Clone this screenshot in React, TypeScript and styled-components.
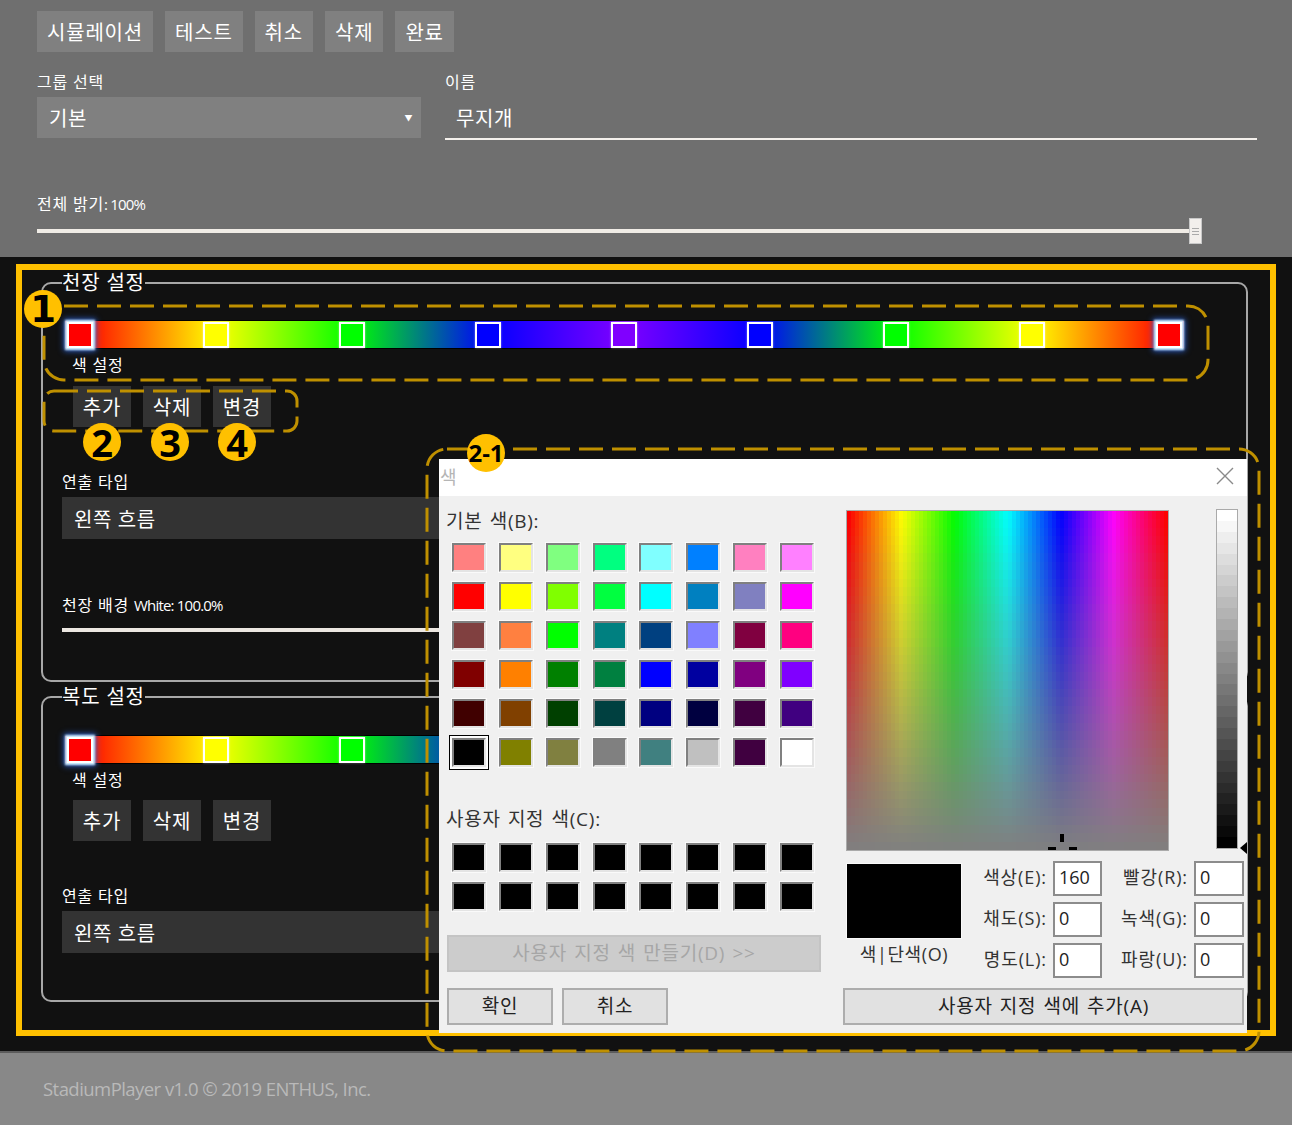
import React from "react";
import styled, { createGlobalStyle } from "styled-components";

const FONT = `"Open Sans", "Noto Sans CJK KR", sans-serif`;

const GlobalStyle = createGlobalStyle`
  html, body {
    margin: 0;
    padding: 0;
    background: #111;
    font-family: ${FONT};
  }
  * {
    box-sizing: border-box;
  }
`;

// Page sections
const Page = styled.div`
  position: relative;
  width: 1292px;
  height: 1125px;
  overflow: hidden;
  color: #fff;
`;

const Header = styled.header`
  height: 257px;
  padding: 11px 35px 0 37px;
  background: #6f6f6f;
`;

const Toolbar = styled.div`
  display: flex;
  gap: 12px;
`;

const ActionButton = styled.div<{ $dark?: boolean }>`
  display: flex;
  align-items: center;
  justify-content: center;
  height: 41px;
  padding: 0 10px;
  width: ${(p) => (p.$dark ? "58px" : "auto")};
  background: ${(p) => (p.$dark ? "#333" : "#808080")};
  color: #fff;
  font-size: 20px;
  letter-spacing: 0.8px;
  white-space: nowrap;
`;

const FormRow = styled.div`
  display: grid;
  grid-template-columns: 384px 812px;
  column-gap: 24px;
  margin-top: 20px;
`;

const FieldLabel = styled.div<{ $top?: number }>`
  height: 20px;
  margin-top: ${(p) => p.$top ?? 0}px;
  margin-bottom: 5px;
  font-size: 16px;
  line-height: 20px;
  letter-spacing: 0.8px;
  color: #fff;
`;

const NarrowText = styled.span`
  font-size: 15px;
  letter-spacing: -0.8px;
`;

const Dropdown = styled.div<{ $dark?: boolean }>`
  display: flex;
  align-items: center;
  justify-content: space-between;
  height: ${(p) => (p.$dark ? "42px" : "41px")};
  padding: 0 8px 0 12px;
  background: ${(p) => (p.$dark ? "#333" : "#808080")};
  font-size: 20px;
  letter-spacing: 0.6px;
`;

const Caret = styled.span`
  font-size: 8px;
`;

const NameInput = styled.div`
  display: flex;
  align-items: center;
  height: 43px;
  padding-left: 11px;
  border-bottom: 2px solid #f4f0ec;
  font-size: 20px;
  letter-spacing: 0.6px;
`;

const SliderRow = styled.div`
  display: flex;
  align-items: center;
  width: 1165px;
  height: 26px;
  margin-top: -1px;
`;

const SliderTrack = styled.div`
  flex: 1;
  height: 4px;
  background: #f0ece6;
`;

const SliderThumb = styled.div`
  display: flex;
  flex-direction: column;
  align-items: center;
  justify-content: center;
  gap: 2px;
  width: 13px;
  height: 26px;
  background: #f2efec;
  border: 1px solid #c8c8c8;
  span {
    width: 7px;
    height: 1px;
    background: #aaa;
  }
`;

const Main = styled.main`
  height: 794px;
  padding: 13px 0 0 41px;
  background: #111;
`;

const Group = styled.fieldset`
  width: 1207px;
  margin: 0 0 2px;
  padding: 0 0 47px 19px;
  border: 2px solid #a8a8a8;
  border-radius: 10px;
`;

const GroupTitle = styled.legend`
  padding: 0;
  height: 26px;
  font-size: 20px;
  line-height: 26px;
  letter-spacing: 0.8px;
  color: #fff;
`;

const ColorBar = styled.div<{ $top: number }>`
  display: flex;
  align-items: center;
  justify-content: space-between;
  width: 1118.5px;
  height: 27px;
  margin: ${(p) => p.$top}px 0 0 3px;
  box-shadow: 0 0 0 1px #000;
  background: linear-gradient(
    90deg,
    #f00 15px,
    #ff0 151px,
    #0f0 287px,
    #00f 423px,
    #8000ff 559px,
    #00f 695px,
    #0f0 831px,
    #ff0 968px,
    #f00 1104px
  );
`;

const ThumbSlot = styled.div`
  display: flex;
  justify-content: center;
  width: 30px;
`;

const ColorThumb = styled.div<{ $color: string; $active?: boolean }>`
  width: 26px;
  height: 26px;
  background: ${(p) => p.$color};
  border: 2px solid #fff;
  box-shadow: ${(p) =>
    p.$active
      ? "0 0 2px 2px #d4efff, 0 0 6px 3px #2a5fd0"
      : "0 0 2px rgba(255, 255, 255, 0.5)"};
`;

const BarCaption = styled.div`
  height: 20px;
  margin: 7px 0 0 10px;
  font-size: 16px;
  line-height: 20px;
  letter-spacing: 0.8px;
`;

const BarActions = styled.div<{ $top: number }>`
  display: flex;
  gap: 12px;
  margin: ${(p) => p.$top}px 0 45px 11px;
`;

const FullSlider = styled.div`
  width: 1161px;
  height: 4px;
  margin: 13px 0 1px;
  background: #ece7e1;
`;

const Footer = styled.footer`
  height: 74px;
  padding: 23px 0 0 43px;
  background: #888;
  border-top: 2px solid #5c5c5c;
  font-size: 18.5px;
  line-height: 26px;
  letter-spacing: -0.55px;
  color: #b9b9b9;
`;

// Annotations drawn over the screenshot
const YellowFrame = styled.div`
  position: absolute;
  left: 16px;
  top: 264px;
  width: 1260px;
  height: 772px;
  border: 6px solid #ffc000;
  pointer-events: none;
`;

const DashLayer = styled.svg`
  position: absolute;
  left: 0;
  top: 0;
  pointer-events: none;
`;

const Badge = styled.div<{ $x: number; $y: number; $size?: number; $serif?: boolean }>`
  position: absolute;
  left: ${(p) => p.$x - 19}px;
  top: ${(p) => p.$y - 19}px;
  display: flex;
  align-items: center;
  justify-content: center;
  width: 38px;
  height: 38px;
  border-radius: 50%;
  background: #ffc000;
  color: #000;
  font-family: ${(p) => (p.$serif ? `"DejaVu Sans"` : `"Open Sans"`)}, sans-serif;
  font-weight: 700;
  font-size: ${(p) => p.$size ?? 38}px;
  line-height: 1;
`;

// Windows colour dialog
const Dialog = styled.div`
  position: absolute;
  left: 439px;
  top: 459px;
  width: 808px;
  height: 574px;
  background: #f0f0f0;
  color: #333;
`;

const TitleBar = styled.div`
  display: flex;
  align-items: center;
  justify-content: space-between;
  height: 37px;
  padding: 0 13px 3px 1px;
  background: #fff;
  color: #b5b5b5;
  font-size: 18px;
`;

const DialogBody = styled.div`
  display: grid;
  grid-template-columns: 401px 1fr;
`;

const LeftPane = styled.div`
  padding: 13px 0 0 7px;
`;

const RightPane = styled.div`
  padding: 15px 0 0 7px;
`;

const DialogLabel = styled.div<{ $top?: number }>`
  height: 24px;
  margin-top: ${(p) => p.$top ?? 0}px;
  font-size: 19px;
  line-height: 24px;
  letter-spacing: 0.75px;
  word-spacing: 1.5px;
  color: #333;
`;

const SwatchGrid = styled.div<{ $top: number }>`
  display: grid;
  grid-template-columns: repeat(8, 34px);
  grid-auto-rows: 29px;
  column-gap: 12.86px;
  row-gap: 10px;
  margin: ${(p) => p.$top}px 0 0 6px;
`;

const Swatch = styled.div<{ $color: string; $selected?: boolean }>`
  background: ${(p) => p.$color};
  border-style: solid;
  border-width: 2px;
  border-color: #808080 #e4e4e4 #e4e4e4 #808080;
  outline: 1px solid #fafafa;
  box-shadow: ${(p) =>
    p.$selected ? "0 0 0 2px #fff, 0 0 0 3px #000" : "none"};
`;

const DialogButton = styled.div<{ $width: number; $disabled?: boolean }>`
  display: flex;
  align-items: center;
  justify-content: center;
  width: ${(p) => p.$width}px;
  height: 37px;
  padding-bottom: 4px;
  border: 2px solid ${(p) => (p.$disabled ? "#c4c4c4" : "#adadad")};
  background: ${(p) => (p.$disabled ? "#cccccc" : "#e1e1e1")};
  color: ${(p) => (p.$disabled ? "#a6a6a6" : "#222")};
  font-size: 19px;
  letter-spacing: 0.75px;
  word-spacing: 1.5px;
`;

const MakeCustomButton = styled(DialogButton)`
  margin: 24px 0 0 1px;
`;

const ButtonRow = styled.div`
  display: flex;
  gap: 9px;
  margin: 16px 0 0 1px;
`;

const SpectrumRow = styled.div`
  position: relative;
  display: flex;
  align-items: flex-start;
  gap: 49px;
`;

const Spectrum = styled.svg`
  display: block;
  outline: 1px solid #aaa;
`;

const LumBar = styled.svg`
  display: block;
  margin-top: -1px;
  outline: 1px solid #aaa;
`;

const LumArrow = styled.div`
  position: absolute;
  left: 393px;
  top: 331px;
  width: 0;
  height: 0;
  border-top: 6px solid transparent;
  border-bottom: 6px solid transparent;
  border-right: 7px solid #000;
`;

const ValuesRow = styled.div`
  display: flex;
  margin-top: 11px;
`;

const PreviewColumn = styled.div`
  width: 114px;
  padding-top: 3px;
`;

const Preview = styled.div`
  height: 74px;
  background: #000;
  outline: 1px solid #fafafa;
`;

const PreviewLabel = styled.div`
  margin-top: 4px;
  font-size: 18px;
  line-height: 24px;
  letter-spacing: 0.6px;
  text-align: center;
`;

const ValueGrid = styled.div`
  display: grid;
  grid-template-columns: 92px 49px 92px 50px;
  grid-auto-rows: 35px;
  row-gap: 6px;
`;

const ValueLabel = styled.div`
  align-self: center;
  padding: 0 6px 5px 0;
  font-size: 18px;
  letter-spacing: 0.9px;
  text-align: right;
  white-space: nowrap;
`;

const ValueBox = styled.div`
  display: flex;
  align-items: center;
  padding: 0 0 3px 4px;
  background: #fff;
  border: 2px solid #8c8c8c;
  font-size: 18px;
  color: #222;
`;

const AddButton = styled(DialogButton)`
  margin: 10px 0 0 -4px;
`;

const basicColors = [
  "#ff8080", "#ffff80", "#80ff80", "#00ff80", "#80ffff", "#0080ff", "#ff80c0", "#ff80ff",
  "#ff0000", "#ffff00", "#80ff00", "#00ff40", "#00ffff", "#0080c0", "#8080c0", "#ff00ff",
  "#804040", "#ff8040", "#00ff00", "#008080", "#004080", "#8080ff", "#800040", "#ff0080",
  "#800000", "#ff8000", "#008000", "#008040", "#0000ff", "#0000a0", "#800080", "#8000ff",
  "#400000", "#804000", "#004000", "#004040", "#000080", "#000040", "#400040", "#400080",
  "#000000", "#808000", "#808040", "#808080", "#408080", "#c0c0c0", "#400040", "#ffffff",
];

const stops = ["#f00", "#ff0", "#0f0", "#00f", "#8000ff", "#00f", "#0f0", "#ff0", "#f00"];

const SPECTRUM_COLS = 80;
const SPECTRUM_ROWS = 40;
const LUM_STEPS = 31;

const StopBar = ({ colors, top }: { colors: string[]; top: number }) => (
  <ColorBar $top={top}>
    {colors.map((color, i) => (
      <ThumbSlot key={i}>
        <ColorThumb $color={color} $active={i === 0 || i === colors.length - 1} />
      </ThumbSlot>
    ))}
  </ColorBar>
);

const BarButtons = ({ top }: { top: number }) => (
  <BarActions $top={top}>
    <ActionButton $dark>추가</ActionButton>
    <ActionButton $dark>삭제</ActionButton>
    <ActionButton $dark>변경</ActionButton>
  </BarActions>
);

const SpectrumDrawing = () => {
  const cw = 321 / SPECTRUM_COLS;
  const ch = 339 / SPECTRUM_ROWS;
  const cells = [];
  for (let y = 0; y < SPECTRUM_ROWS; y++) {
    for (let x = 0; x < SPECTRUM_COLS; x++) {
      const hue = (x / (SPECTRUM_COLS - 1)) * 360;
      const sat = 100 * (1 - (y + 0.5) / SPECTRUM_ROWS);
      cells.push(
        <rect
          key={`${x}-${y}`}
          x={x * cw}
          y={y * ch}
          width={cw + 0.5}
          height={ch + 0.5}
          fill={`hsl(${hue}, ${sat}%, 50%)`}
        />
      );
    }
  }
  return (
    <Spectrum width={321} height={339} shapeRendering="crispEdges">
      {cells}
      <rect x={213} y={323} width={4} height={8} fill="#000" />
      <rect x={201} y={336} width={8} height={3} fill="#000" />
      <rect x={222} y={336} width={8} height={3} fill="#000" />
    </Spectrum>
  );
};

const LumDrawing = () => {
  const h = 338 / LUM_STEPS;
  return (
    <LumBar width={20} height={338} shapeRendering="crispEdges">
      {Array.from({ length: LUM_STEPS }, (_, i) => {
        const v = Math.round(255 - (i / (LUM_STEPS - 1)) * 255);
        return (
          <rect
            key={i}
            x={0}
            y={i * h}
            width={20}
            height={h + 0.5}
            fill={`rgb(${v}, ${v}, ${v})`}
          />
        );
      })}
    </LumBar>
  );
};

const App: React.FC = () => {
  return (
    <Page>
      <GlobalStyle />

      <Header>
        <Toolbar>
          <ActionButton>시뮬레이션</ActionButton>
          <ActionButton>테스트</ActionButton>
          <ActionButton>취소</ActionButton>
          <ActionButton>삭제</ActionButton>
          <ActionButton>완료</ActionButton>
        </Toolbar>

        <FormRow>
          <div>
            <FieldLabel>그룹 선택</FieldLabel>
            <Dropdown>
              기본
              <Caret>▼</Caret>
            </Dropdown>
          </div>
          <div>
            <FieldLabel>이름</FieldLabel>
            <NameInput>무지개</NameInput>
          </div>
        </FormRow>

        <FieldLabel $top={54}>
          전체 밝기<NarrowText>: 100%</NarrowText>
        </FieldLabel>
        <SliderRow>
          <SliderTrack />
          <SliderThumb>
            <span />
            <span />
            <span />
          </SliderThumb>
        </SliderRow>
      </Header>

      <Main>
        {/* Ceiling settings */}
        <Group>
          <GroupTitle>천장 설정</GroupTitle>
          <StopBar colors={stops} top={25} />
          <BarCaption>색 설정</BarCaption>
          <BarButtons top={11} />
          <FieldLabel>연출 타입</FieldLabel>
          <Dropdown $dark>왼쪽 흐름</Dropdown>
          <FieldLabel $top={56}>
            천장 배경 <NarrowText>White: 100.0%</NarrowText>
          </FieldLabel>
          <FullSlider />
        </Group>

        {/* Corridor settings */}
        <Group>
          <GroupTitle>복도 설정</GroupTitle>
          <StopBar colors={stops} top={26} />
          <BarCaption>색 설정</BarCaption>
          <BarButtons top={10} />
          <FieldLabel>연출 타입</FieldLabel>
          <Dropdown $dark>왼쪽 흐름</Dropdown>
        </Group>
      </Main>

      <Footer>StadiumPlayer v1.0 © 2019 ENTHUS, Inc.</Footer>

      <YellowFrame />

      <DashLayer width={1292} height={1125} fill="none">
        <g stroke="#bf9000" strokeWidth={3} strokeDasharray="24 9">
          <rect x={44} y={306} width={1164} height={74} rx={20} />
          <rect x={44} y={391} width={253} height={40} rx={10} />
          <rect x={427} y={449} width={832} height={602} rx={20} />
        </g>
      </DashLayer>

      <Dialog>
        <TitleBar>
          색
          <svg width={18} height={18} viewBox="0 0 18 18">
            <path d="M1 1 L17 17 M17 1 L1 17" stroke="#8a8a8a" strokeWidth={1.4} />
          </svg>
        </TitleBar>
        <DialogBody>
          <LeftPane>
            <DialogLabel>기본 색(B):</DialogLabel>
            <SwatchGrid $top={10}>
              {basicColors.map((color, i) => (
                <Swatch key={i} $color={color} $selected={i === 40} />
              ))}
            </SwatchGrid>
            <DialogLabel $top={40}>사용자 지정 색(C):</DialogLabel>
            <SwatchGrid $top={12}>
              {Array.from({ length: 16 }, (_, i) => (
                <Swatch key={i} $color="#000" />
              ))}
            </SwatchGrid>
            <MakeCustomButton $width={374} $disabled>
              사용자 지정 색 만들기(D) &gt;&gt;
            </MakeCustomButton>
            <ButtonRow>
              <DialogButton $width={106}>확인</DialogButton>
              <DialogButton $width={106}>취소</DialogButton>
            </ButtonRow>
          </LeftPane>

          <RightPane>
            <SpectrumRow>
              <SpectrumDrawing />
              <LumDrawing />
              <LumArrow />
            </SpectrumRow>
            <ValuesRow>
              <PreviewColumn>
                <Preview />
                <PreviewLabel>색|단색(O)</PreviewLabel>
              </PreviewColumn>
              <ValueGrid>
                <ValueLabel>색상(E):</ValueLabel>
                <ValueBox>160</ValueBox>
                <ValueLabel>빨강(R):</ValueLabel>
                <ValueBox>0</ValueBox>
                <ValueLabel>채도(S):</ValueLabel>
                <ValueBox>0</ValueBox>
                <ValueLabel>녹색(G):</ValueLabel>
                <ValueBox>0</ValueBox>
                <ValueLabel>명도(L):</ValueLabel>
                <ValueBox>0</ValueBox>
                <ValueLabel>파랑(U):</ValueLabel>
                <ValueBox>0</ValueBox>
              </ValueGrid>
            </ValuesRow>
            <AddButton $width={401}>사용자 지정 색에 추가(A)</AddButton>
          </RightPane>
        </DialogBody>
      </Dialog>

      <Badge $x={43} $y={309} $size={37} $serif>1</Badge>
      <Badge $x={102} $y={442}>2</Badge>
      <Badge $x={170} $y={442}>3</Badge>
      <Badge $x={237} $y={442}>4</Badge>
      <Badge $x={486} $y={453} $size={24}>2-1</Badge>
    </Page>
  );
};

export default App;
